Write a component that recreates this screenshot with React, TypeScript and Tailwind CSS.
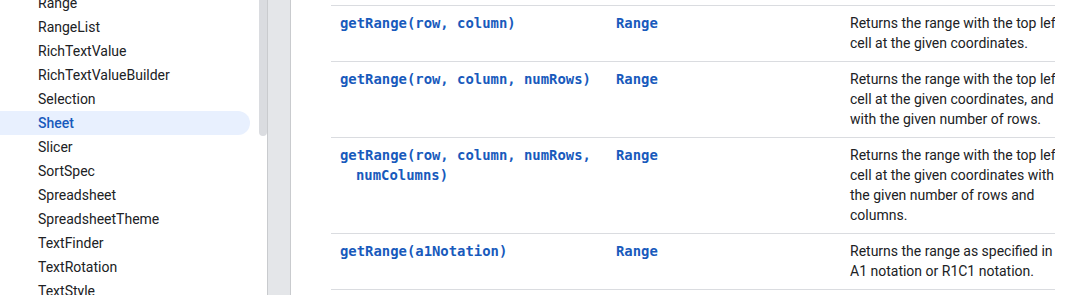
import React from 'react';

const NAV_ITEMS = [
  'Range',
  'RangeList',
  'RichTextValue',
  'RichTextValueBuilder',
  'Selection',
  'Sheet',
  'Slicer',
  'SortSpec',
  'Spreadsheet',
  'SpreadsheetTheme',
  'TextFinder',
  'TextRotation',
  'TextStyle',
];

interface Method {
  signature: string;
  returnType: string;
  description: string;
}

const METHODS: Method[] = [
  {
    signature: 'getRange(row, column)',
    returnType: 'Range',
    description: 'Returns the range with the top left cell at the given coordinates.',
  },
  {
    signature: 'getRange(row, column, numRows)',
    returnType: 'Range',
    description:
      'Returns the range with the top left cell at the given coordinates, and with the given number of rows.',
  },
  {
    signature: 'getRange(row, column, numRows, numColumns)',
    returnType: 'Range',
    description:
      'Returns the range with the top left cell at the given coordinates with the given number of rows and columns.',
  },
  {
    signature: 'getRange(a1Notation)',
    returnType: 'Range',
    description: 'Returns the range as specified in A1 notation or R1C1 notation.',
  },
];

const mono = "font-['DejaVu_Sans_Mono','Liberation_Mono',monospace]";

export default function App() {
  return (
    <div className="flex h-[295px] w-[1077px] overflow-hidden bg-white font-['Roboto',sans-serif] text-[14px] leading-5 text-[#202124]">
      {/* Sidebar */}
      <aside className="relative w-[267px] shrink-0 overflow-hidden">
        <ul className="-mt-[9px]">
          {NAV_ITEMS.map((item) => {
            const active = item === 'Sheet';
            return (
              <li
                key={item}
                className={`flex h-6 w-[250px] items-center rounded-r-full pl-[38px] ${
                  active ? 'bg-[#e8f0fe] font-medium text-[#185abc]' : ''
                }`}
              >
                {item}
              </li>
            );
          })}
        </ul>
        {/* scrollbar thumb */}
        <div className="absolute -top-2 right-0 h-[144px] w-2 rounded-full bg-[#dadce0]" />
      </aside>

      {/* Divider strip */}
      <div className="w-6 shrink-0 border-x border-[#c9cbce] bg-[#e4e6e9]" />

      {/* Main content */}
      <main className="flex-1 pl-10 pt-[5px]">
        <div className="w-[724px] overflow-hidden">
          <div className="w-[743px] border-b border-[#dadce0]">
            {METHODS.map((m) => (
              <div
                key={m.signature}
                className="grid grid-cols-[276px_234px_233px] border-t border-[#dadce0]"
              >
                <div className="pb-2 pl-[9px] pr-2 pt-[7px]">
                  <code className={`${mono} block pl-4 -indent-4 text-[13.9px] font-bold text-[#185abc]`}>
                    {m.signature}
                  </code>
                </div>
                <div className="pb-2 pl-[9px] pr-2 pt-[7px]">
                  <code className={`${mono} text-[13.9px] font-bold text-[#185abc]`}>{m.returnType}</code>
                </div>
                <div className="pb-2 pl-[9px] pr-2 pt-[7px]">{m.description}</div>
              </div>
            ))}
          </div>
        </div>
      </main>
    </div>
  );
}
